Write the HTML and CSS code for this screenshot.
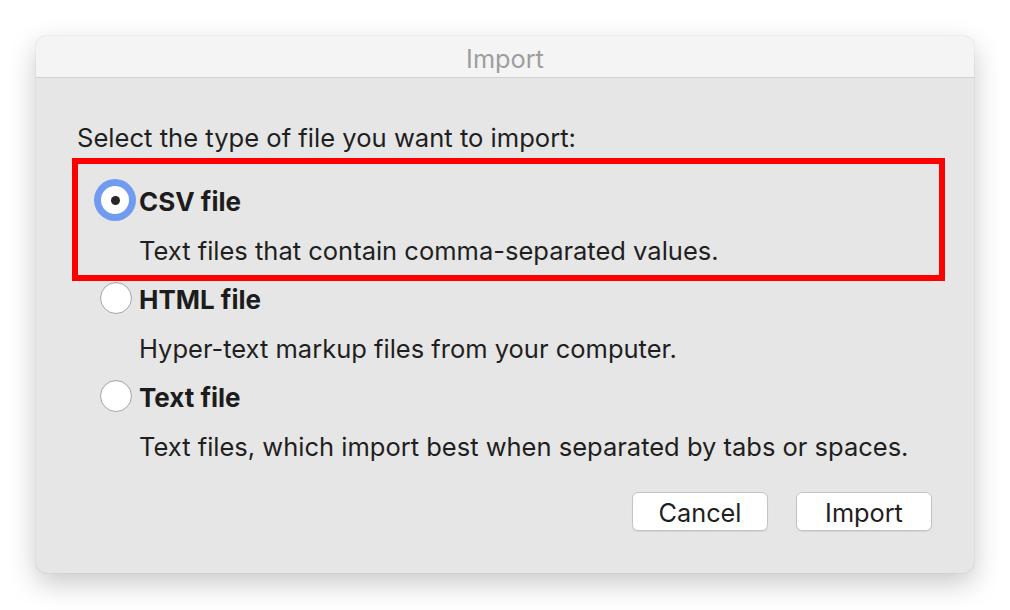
FILE: index.html
```html
<!DOCTYPE html>
<html lang="en">
<head>
<meta charset="utf-8">
<title>Import</title>
<link rel="stylesheet" href="styles.css">
</head>
<body>
  <div class="window">
    <div class="titlebar">Import</div>
    <div class="content">
      <div class="prompt">Select the type of file you want to import:</div>
      <div class="options">
        <div class="option highlighted">
          <div class="option-head">
            <span class="radio checked"><span class="dot"></span></span>
            <span class="label">CSV file</span>
          </div>
          <div class="desc">Text files that contain comma-separated values.</div>
        </div>
        <div class="option">
          <div class="option-head">
            <span class="radio"></span>
            <span class="label">HTML file</span>
          </div>
          <div class="desc">Hyper-text markup files from your computer.</div>
        </div>
        <div class="option">
          <div class="option-head">
            <span class="radio"></span>
            <span class="label">Text file</span>
          </div>
          <div class="desc">Text files, which import best when separated by tabs or spaces.</div>
        </div>
      </div>
      <div class="buttons">
        <button class="btn">Cancel</button>
        <button class="btn">Import</button>
      </div>
    </div>
  </div>
</body>
</html>
```
FILE: styles.css
```css
html, body {
  margin: 0;
  padding: 0;
  background: #ffffff;
}

body {
  width: 1010px;
  height: 610px;
  overflow: hidden;
  font-family: Inter, "Noto Sans", "Liberation Sans", sans-serif;
  color: #1f1f1f;
  padding: 36px 0 0 36px;
  box-sizing: border-box;
}

.window {
  width: 938px;
  height: 537px;
  border-radius: 10px;
  background: #e6e6e6;
  box-shadow: 0 10px 28px rgba(0, 0, 0, 0.22), 0 0 1px rgba(0, 0, 0, 0.25);
  overflow: hidden;
  display: flex;
  flex-direction: column;
}

.titlebar {
  height: 42px;
  flex: none;
  background: #f4f4f4;
  border-bottom: 1px solid #d0d0d0;
  display: flex;
  align-items: center;
  justify-content: center;
  font-size: 25.3px;
  color: #9e9e9e;
  padding-top: 3px;
  box-sizing: border-box;
}

.content {
  flex: 1;
  display: flex;
  flex-direction: column;
  padding: 36px 42px 41px 41px;
}

.prompt {
  height: 48px;
  line-height: 48px;
  font-size: 25.6px;
}

.options {
  margin-top: 14px;
  display: flex;
  flex-direction: column;
}

.option {
  position: relative;
  display: flex;
  flex-direction: column;
  gap: 1px;
  padding-bottom: 1px;
  padding-left: 23px;
}

.option.highlighted::after {
  content: "";
  position: absolute;
  left: -5px;
  top: -18px;
  width: 861px;
  height: 111px;
  border: 6px solid #ff0000;
  pointer-events: none;
}

.option-head {
  height: 48px;
  display: flex;
  align-items: center;
  gap: 7px;
}

.radio {
  width: 32px;
  height: 32px;
  box-sizing: border-box;
  border-radius: 50%;
  background: #ffffff;
  border: 1px solid #a6a6a6;
  box-shadow: inset 0 1px 1px rgba(0, 0, 0, 0.06);
  display: flex;
  align-items: center;
  justify-content: center;
  flex: none;
}

.radio.checked {
  border: 2px solid #6f9cf0;
  box-shadow: 0 0 0 5px #6f9cf0;
  position: relative;
  left: -1px;
}

.dot {
  width: 9px;
  height: 9px;
  border-radius: 50%;
  background: #262626;
}

.label {
  font-size: 26px;
  font-weight: 700;
  color: #1c1c1c;
  padding-top: 2px;
}

.desc {
  height: 48px;
  line-height: 52px;
  font-size: 25.5px;
  padding-left: 39px;
}

.buttons {
  margin-top: 22px;
  display: flex;
  justify-content: flex-end;
  gap: 28px;
}

.btn {
  width: 136px;
  height: 39px;
  box-sizing: border-box;
  border: 1px solid #c4c4c4;
  border-radius: 6px;
  background: #ffffff;
  box-shadow: 0 1px 1px rgba(0, 0, 0, 0.08);
  font-family: Inter, "Noto Sans", "Liberation Sans", sans-serif;
  font-size: 25.3px;
  color: #1f1f1f;
  padding: 2px 0 0 0;
}
```
